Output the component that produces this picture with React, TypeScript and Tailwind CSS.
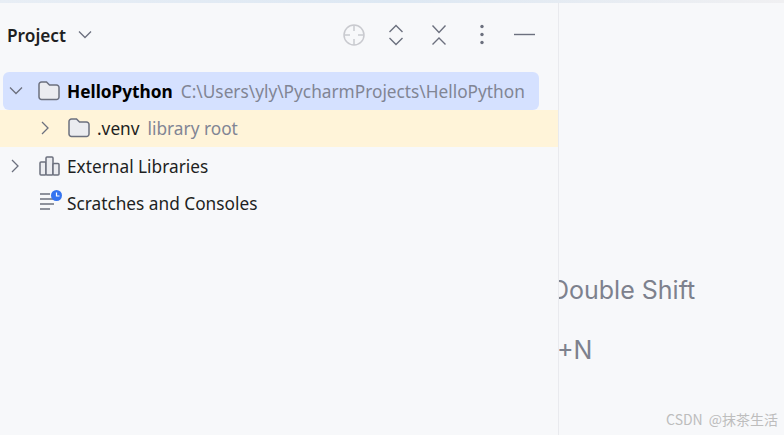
import React from "react";

const Chevron = ({ dir, className }: { dir: "down" | "right"; className?: string }) => (
  <svg width="16" height="16" viewBox="0 0 16 16" fill="none" className={className}>
    <path d={dir === "down" ? "M2 4.5 8 10.5 14 4.5" : "M5 2 11 8 5 14"} stroke="#6c707e" strokeWidth="1.3" />
  </svg>
);

const Folder = () => (
  <svg width="22" height="22" viewBox="0 0 22 22" fill="none" className="shrink-0">
    <path d="M1 4.5A2.5 2.5 0 0 1 3.5 2H8.5L11.5 5H18.5A2.5 2.5 0 0 1 21 7.5V17A2.5 2.5 0 0 1 18.5 19.5H3.5A2.5 2.5 0 0 1 1 17Z" fill="#ebecf0" stroke="#6c707e" strokeWidth="1.5" />
  </svg>
);

const Row = ({ children, className }: { children: React.ReactNode; className?: string }) => (
  <div className={`flex h-[37.5px] items-center ${className ?? ""}`}>{children}</div>
);

export default function App() {
  return (
    <div className="relative flex h-[435px] w-[784px] flex-col overflow-hidden bg-[#f7f8fa] font-['Noto_Sans',sans-serif] text-[17.25px] text-[#1e1f22]">
      <div className="h-[3px] w-full shrink-0 bg-gradient-to-r from-[#e8eef5] via-[#dde8f3] to-[#f0f0f2]" />
      <div className="flex min-h-0 flex-1">
        <aside className="flex w-[559px] shrink-0 flex-col border-r border-[#e9eaee]">
          <header className="mt-[20px] flex h-[24px] items-center justify-between pl-[7px] pr-[22px]">
            <div className="flex items-center gap-[11px]">
              <span className="pt-[2px] font-semibold">Project</span>
              <Chevron dir="down" />
            </div>
            <div className="flex items-center gap-[21px]">
              <svg width="22" height="24" viewBox="0 0 22 24" fill="none" stroke="#c9cacf" strokeWidth="1.5" className="translate-x-[1px]">
                <circle cx="11" cy="12" r="10" />
                <path d="M11 2V8M11 16V22M1 12H7M15 12H21" />
              </svg>
              <svg width="22" height="24" viewBox="0 0 22 24" fill="none" stroke="#6c707e" strokeWidth="1.4">
                <path d="M4.5 9 11 2.5 17.5 9M4.5 15 11 21.5 17.5 15" />
              </svg>
              <svg width="22" height="24" viewBox="0 0 22 24" fill="none" stroke="#6c707e" strokeWidth="1.4">
                <path d="M4.5 2.5 11 9.5 17.5 2.5M4.5 21.5 11 15 17.5 21.5" />
              </svg>
              <svg width="22" height="24" viewBox="0 0 22 24" fill="#6c707e">
                <circle cx="11" cy="3.5" r="1.7" />
                <circle cx="11" cy="11.5" r="1.7" />
                <circle cx="11" cy="19.5" r="1.7" />
              </svg>
              <svg width="22" height="24" viewBox="0 0 22 24" fill="none" stroke="#6c707e" strokeWidth="1.4">
                <path d="M0 11.5H21" />
              </svg>
            </div>
          </header>
          <div className="flex flex-col pt-[25px]">
            <Row className="ml-[3px] mr-[19px] rounded-[6px] bg-[#d5e1ff] pl-[5px]">
              <Chevron dir="down" />
              <div className="ml-[14px]"><Folder /></div>
              <div className="ml-[7px] flex items-center gap-[8px] pt-[2px]">
                <span className="font-bold text-black">HelloPython</span>
                <span className="text-[#818594]">C:\Users\yly\PycharmProjects\HelloPython</span>
              </div>
            </Row>
            <Row className="bg-[#fff4d9] pl-[37px]">
              <Chevron dir="right" />
              <div className="ml-[15px]"><Folder /></div>
              <div className="ml-[7px] flex items-center gap-[8px] pt-[1px]">
                <span>.venv</span>
                <span className="text-[#818594]">library root</span>
              </div>
            </Row>
            <Row className="pl-[7px]">
              <Chevron dir="right" />
              <svg width="22" height="22" viewBox="0 0 22 22" fill="none" stroke="#6c707e" strokeWidth="1.5" className="ml-[15px]">
                <rect x="2" y="7" width="6" height="13" rx="1" fill="#ebecf0" />
                <rect x="8" y="2" width="7" height="18" rx="1" fill="#ebecf0" />
                <rect x="15" y="8.5" width="6" height="11.5" rx="1" fill="#ebecf0" />
              </svg>
              <span className="ml-[7px] pt-[2px]">External Libraries</span>
            </Row>
            <Row className="pl-[38px]">
              <svg width="24" height="24" viewBox="0 0 24 24" fill="none" className="overflow-visible">
                <path d="M2 3H12M2 8H15M2 13H16M2 18H12" stroke="#6c707e" strokeWidth="1.5" />
                <circle cx="18.5" cy="4.5" r="5.5" fill="#3574f0" />
                <path d="M18.5 1.5V5H21.5" stroke="#fff" strokeWidth="1.2" fill="none" />
              </svg>
              <span className="ml-[5px] pt-[1px]">Scratches and Consoles</span>
            </Row>
          </div>
        </aside>
        <main className="flex min-w-0 flex-1 flex-col overflow-hidden pt-[270px] font-['Inter',sans-serif] text-[25px] text-[#7d818d]">
          <div className="-ml-[8px] whitespace-nowrap leading-[34px]">Double Shift</div>
          <div className="-ml-[2px] mt-[26px] whitespace-nowrap leading-[34px]">+N</div>
        </main>
      </div>
      <div className="absolute bottom-[5px] right-[6px] flex gap-[6px] font-['Noto_Sans_CJK_SC',sans-serif] text-[14px] text-[#bdbdbd]">
        <span>CSDN</span>
        <span>@抹茶生活</span>
      </div>
    </div>
  );
}
